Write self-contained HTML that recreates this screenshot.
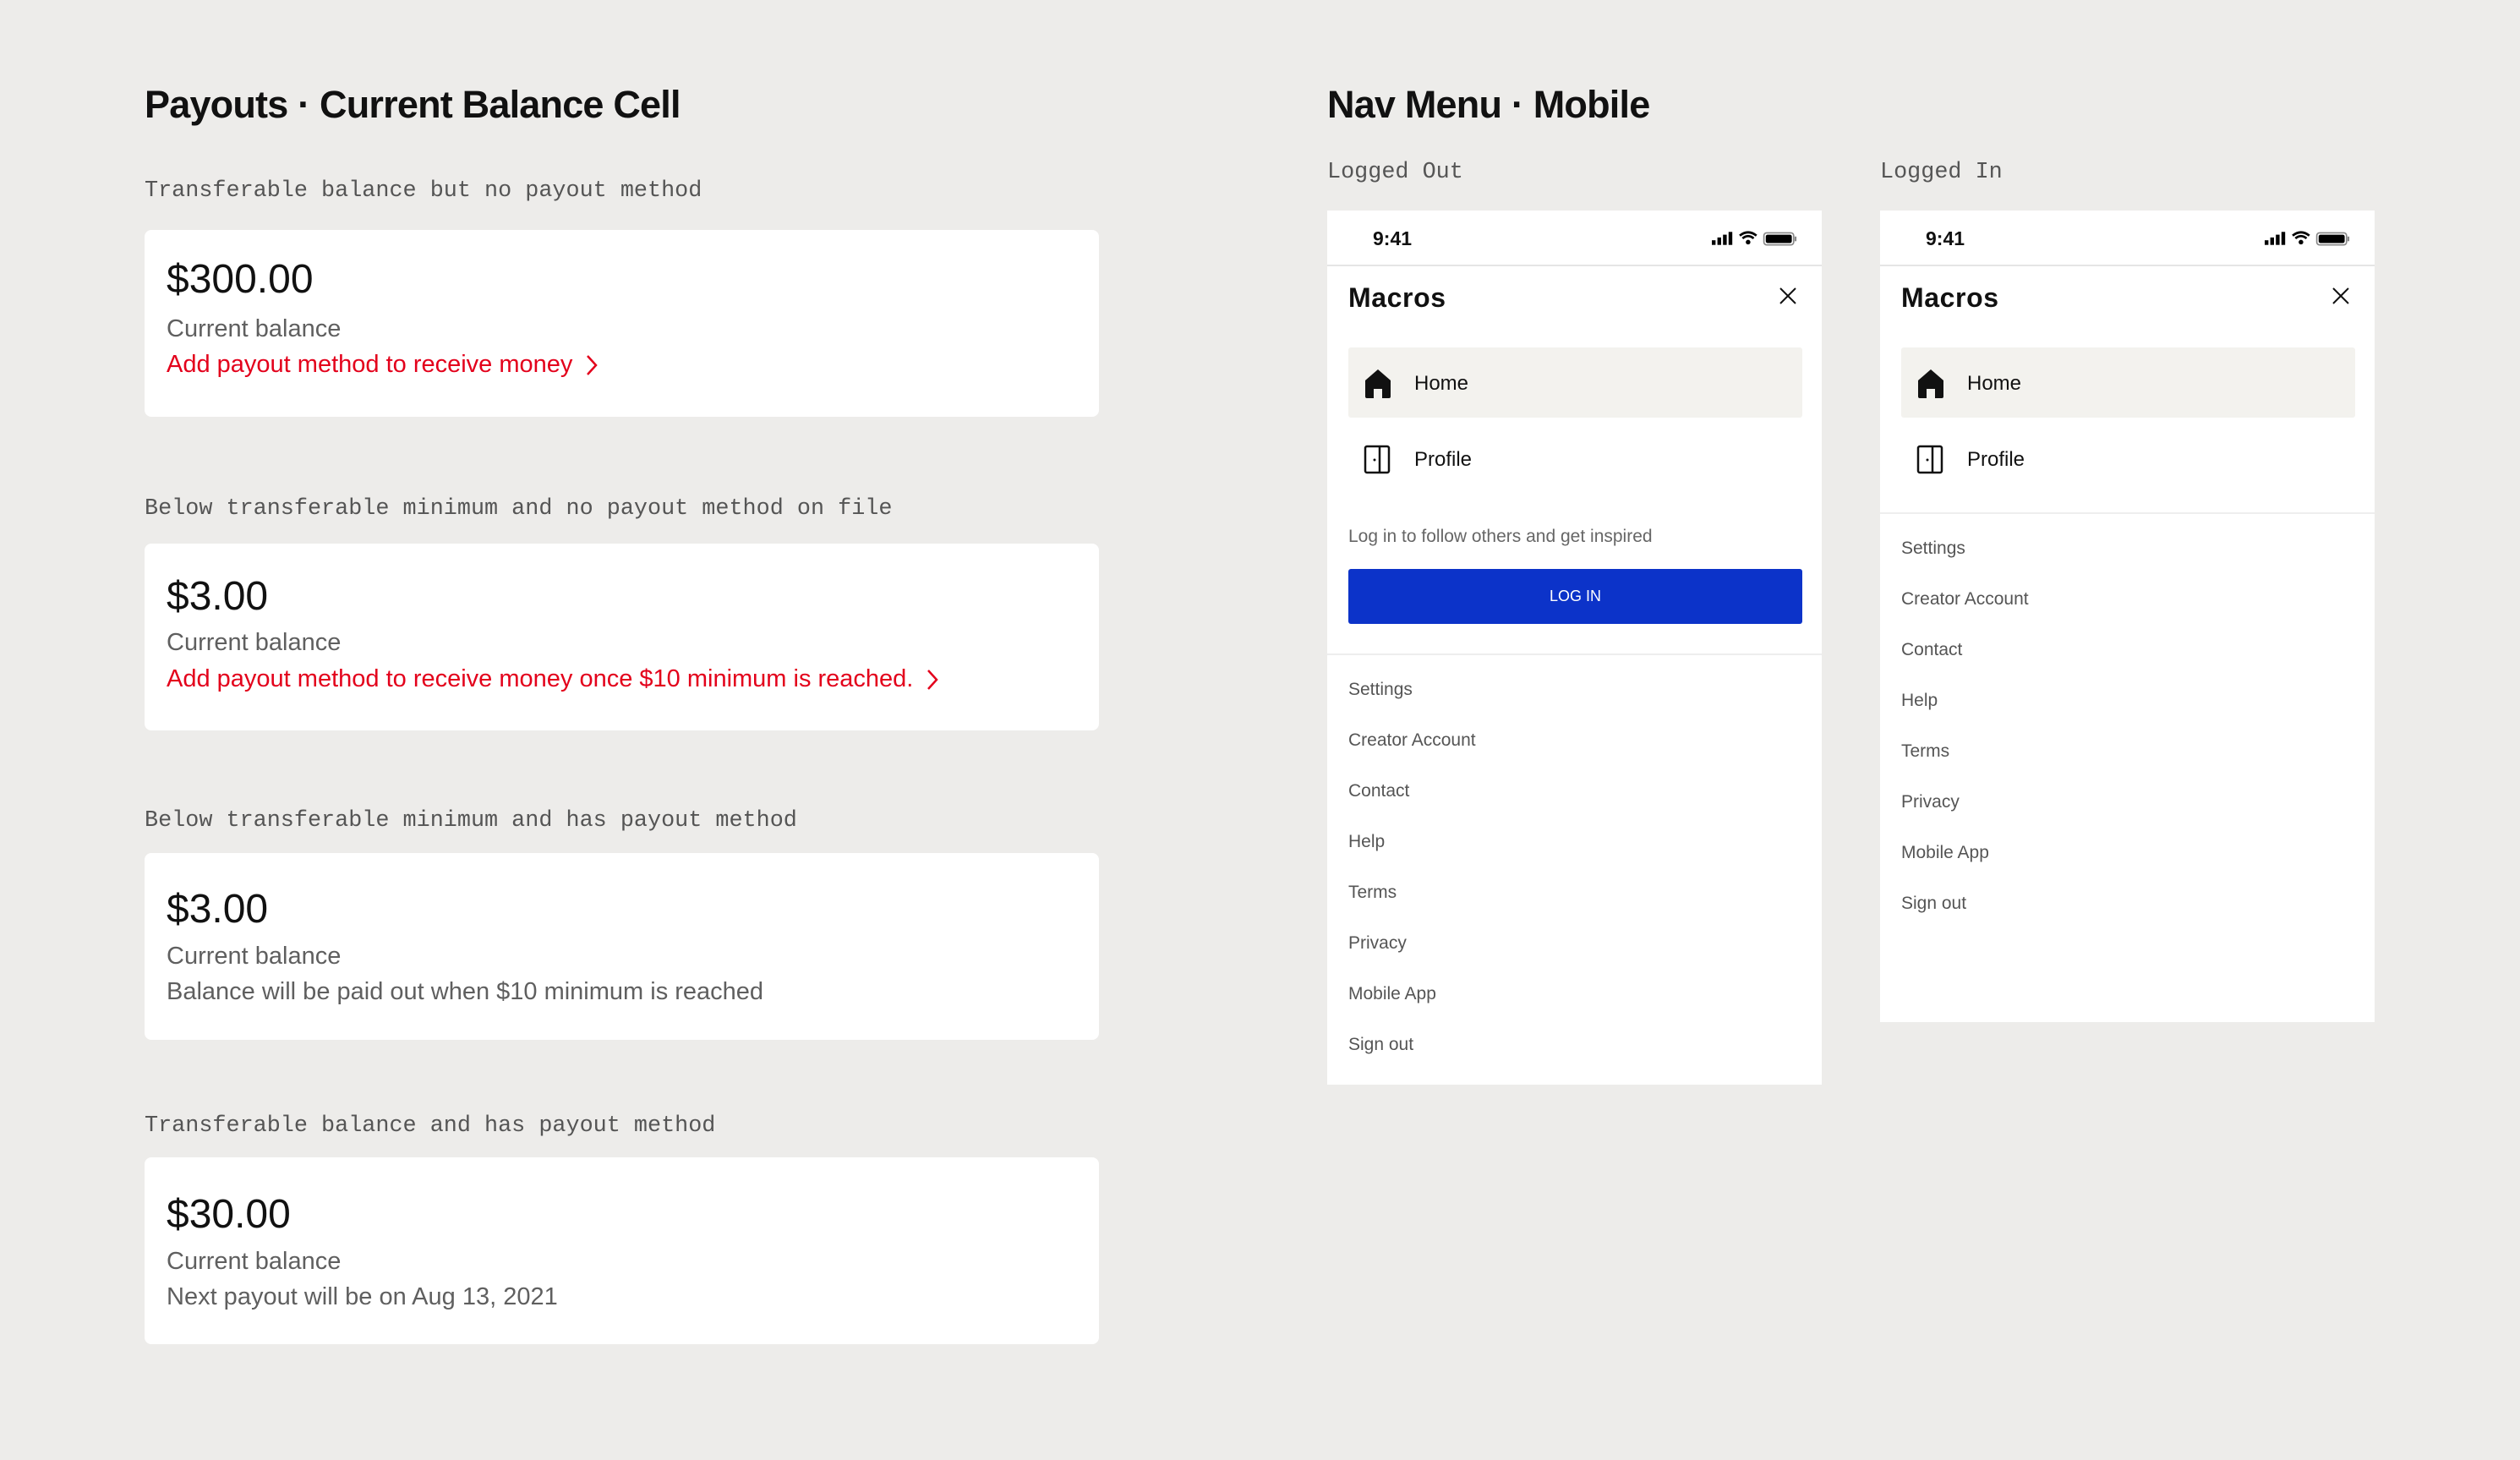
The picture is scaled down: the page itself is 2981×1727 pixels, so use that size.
<!DOCTYPE html>
<html><head><meta charset="utf-8"><style>
*{margin:0;padding:0;box-sizing:border-box}
body{width:2981px;height:1727px;background:#edecea;font-family:"Liberation Sans",sans-serif;position:relative;overflow:hidden;color:#111}
.a{position:absolute;white-space:nowrap}
.h1{font-size:45px;font-weight:bold;letter-spacing:-0.8px}
.mono{font-family:"Liberation Mono",monospace;font-size:26.8px;color:#555}
.card{position:absolute;left:171px;width:1129px;height:221px;background:#fff;border-radius:8px}
.amt{position:absolute;left:26px;font-size:48px;color:#111}
.cb{position:absolute;left:26px;font-size:29px;color:#5f5f5f}
.red{color:#e3001b}
.phone{position:absolute;background:#fff;width:585px}
.nav{position:absolute;left:25px;font-size:21px;color:#555}
.chev{display:inline-block;vertical-align:middle;margin-left:16px}
</style></head><body>
<div class="a h1" style="left:171px;top:98px">Payouts · Current Balance Cell</div>
<div class="a mono" style="left:171px;top:211px">Transferable balance but no payout method</div>
<div class="card" style="top:272px">
 <div class="amt" style="top:31px">$300.00</div>
 <div class="cb" style="top:101px">Current balance</div>
 <div class="cb red" style="top:143px">Add payout method to receive money<svg class="chev" width="14" height="26" viewBox="0 0 14 26"><path d="M2 2L12 13L2 24" stroke="#e3001b" stroke-width="2.5" fill="none"/></svg></div>
</div>
<div class="a mono" style="left:171px;top:587px">Below transferable minimum and no payout method on file</div>
<div class="card" style="top:643px">
 <div class="amt" style="top:35px">$3.00</div>
 <div class="cb" style="top:101px">Current balance</div>
 <div class="cb red" style="top:144px">Add payout method to receive money once $10 minimum is reached.<svg class="chev" width="14" height="26" viewBox="0 0 14 26"><path d="M2 2L12 13L2 24" stroke="#e3001b" stroke-width="2.5" fill="none"/></svg></div>
</div>
<div class="a mono" style="left:171px;top:956px">Below transferable minimum and has payout method</div>
<div class="card" style="top:1009px">
 <div class="amt" style="top:39px">$3.00</div>
 <div class="cb" style="top:106px">Current balance</div>
 <div class="cb" style="top:148px">Balance will be paid out when $10 minimum is reached</div>
</div>
<div class="a mono" style="left:171px;top:1317px">Transferable balance and has payout method</div>
<div class="card" style="top:1369px">
 <div class="amt" style="top:40px">$30.00</div>
 <div class="cb" style="top:107px">Current balance</div>
 <div class="cb" style="top:149px">Next payout will be on Aug 13, 2021</div>
</div>

<div class="a h1" style="left:1570px;top:98px">Nav Menu · Mobile</div>
<div class="a mono" style="left:1570px;top:189px">Logged Out</div>
<div class="a mono" style="left:2224px;top:189px">Logged In</div>

<!-- phone 1 -->
<div class="phone" style="left:1570px;top:249px;height:1034px">
 <div class="a" style="left:54px;top:20px;font-size:23px;font-weight:bold">9:41</div>
 <svg class="a" style="left:455px;top:22px" width="110" height="22" viewBox="0 0 100 18"><rect x="0" y="11" width="4" height="5" fill="#000"/><rect x="6" y="8" width="4" height="8" fill="#000"/><rect x="12" y="5" width="4" height="11" fill="#000"/><rect x="18" y="2" width="4" height="14" fill="#000"/><path d="M30 6 Q39 -1 48 6 M33 9 Q39 4 45 9" stroke="#000" stroke-width="2.5" fill="none"/><circle cx="39" cy="13" r="2.5" fill="#000"/><rect x="56" y="3" width="32" height="13" rx="3" fill="none" stroke="#888" stroke-width="1.5"/><rect x="58" y="5" width="28" height="9" rx="2" fill="#000"/><rect x="89" y="7" width="2" height="5" fill="#888"/></svg>
 <div class="a" style="left:0;top:64px;width:585px;height:2px;background:#e5e5e5"></div>
 <div class="a" style="left:25px;top:85px;font-size:32px;font-weight:bold;letter-spacing:0.6px">Macros</div>
 <svg class="a" style="left:534px;top:90px" width="22" height="22"><path d="M2 2L20 20M20 2L2 20" stroke="#111" stroke-width="2"/></svg>
 <div class="a" style="left:25px;top:162px;width:537px;height:83px;background:#f3f2ee;border-radius:3px"></div>
 <svg class="a" style="left:44px;top:187px" width="32" height="36" viewBox="0 0 32 36"><path d="M16 1L31 14V33a2 2 0 0 1-2 2H21V24H11V35H3a2 2 0 0 1-2-2V14Z" fill="#111"/></svg>
 <div class="a" style="left:103px;top:191px;font-size:24px">Home</div>
 <svg class="a" style="left:43px;top:277px" width="32" height="36"><rect x="2" y="2" width="28" height="31" rx="2" fill="none" stroke="#111" stroke-width="2.5"/><line x1="19" y1="2" x2="19" y2="33" stroke="#111" stroke-width="2.5"/><circle cx="13" cy="18" r="1.5" fill="#111"/></svg>
 <div class="a" style="left:103px;top:281px;font-size:24px">Profile</div>
 <div class="a" style="left:25px;top:374px;font-size:21px;color:#666">Log in to follow others and get inspired</div>
 <div class="a" style="left:25px;top:424px;width:537px;height:65px;background:#0c33c9;border-radius:3px;color:#fff;font-size:18px;text-align:center;line-height:65px">LOG IN</div>
 <div class="a" style="left:0;top:524px;width:585px;height:2px;background:#eee"></div>
 <div class="nav" style="top:555px">Settings</div>
 <div class="nav" style="top:615px">Creator Account</div>
 <div class="nav" style="top:675px">Contact</div>
 <div class="nav" style="top:735px">Help</div>
 <div class="nav" style="top:795px">Terms</div>
 <div class="nav" style="top:855px">Privacy</div>
 <div class="nav" style="top:915px">Mobile App</div>
 <div class="nav" style="top:975px">Sign out</div>
</div>

<!-- phone 2 -->
<div class="phone" style="left:2224px;top:249px;height:960px">
 <div class="a" style="left:54px;top:20px;font-size:23px;font-weight:bold">9:41</div>
 <svg class="a" style="left:455px;top:22px" width="110" height="22" viewBox="0 0 100 18"><rect x="0" y="11" width="4" height="5" fill="#000"/><rect x="6" y="8" width="4" height="8" fill="#000"/><rect x="12" y="5" width="4" height="11" fill="#000"/><rect x="18" y="2" width="4" height="14" fill="#000"/><path d="M30 6 Q39 -1 48 6 M33 9 Q39 4 45 9" stroke="#000" stroke-width="2.5" fill="none"/><circle cx="39" cy="13" r="2.5" fill="#000"/><rect x="56" y="3" width="32" height="13" rx="3" fill="none" stroke="#888" stroke-width="1.5"/><rect x="58" y="5" width="28" height="9" rx="2" fill="#000"/><rect x="89" y="7" width="2" height="5" fill="#888"/></svg>
 <div class="a" style="left:0;top:64px;width:585px;height:2px;background:#e5e5e5"></div>
 <div class="a" style="left:25px;top:85px;font-size:32px;font-weight:bold;letter-spacing:0.6px">Macros</div>
 <svg class="a" style="left:534px;top:90px" width="22" height="22"><path d="M2 2L20 20M20 2L2 20" stroke="#111" stroke-width="2"/></svg>
 <div class="a" style="left:25px;top:162px;width:537px;height:83px;background:#f3f2ee;border-radius:3px"></div>
 <svg class="a" style="left:44px;top:187px" width="32" height="36" viewBox="0 0 32 36"><path d="M16 1L31 14V33a2 2 0 0 1-2 2H21V24H11V35H3a2 2 0 0 1-2-2V14Z" fill="#111"/></svg>
 <div class="a" style="left:103px;top:191px;font-size:24px">Home</div>
 <svg class="a" style="left:43px;top:277px" width="32" height="36"><rect x="2" y="2" width="28" height="31" rx="2" fill="none" stroke="#111" stroke-width="2.5"/><line x1="19" y1="2" x2="19" y2="33" stroke="#111" stroke-width="2.5"/><circle cx="13" cy="18" r="1.5" fill="#111"/></svg>
 <div class="a" style="left:103px;top:281px;font-size:24px">Profile</div>
 <div class="a" style="left:0;top:357px;width:585px;height:2px;background:#eee"></div>
 <div class="nav" style="top:388px">Settings</div>
 <div class="nav" style="top:448px">Creator Account</div>
 <div class="nav" style="top:508px">Contact</div>
 <div class="nav" style="top:568px">Help</div>
 <div class="nav" style="top:628px">Terms</div>
 <div class="nav" style="top:688px">Privacy</div>
 <div class="nav" style="top:748px">Mobile App</div>
 <div class="nav" style="top:808px">Sign out</div>
</div>
</body></html>
